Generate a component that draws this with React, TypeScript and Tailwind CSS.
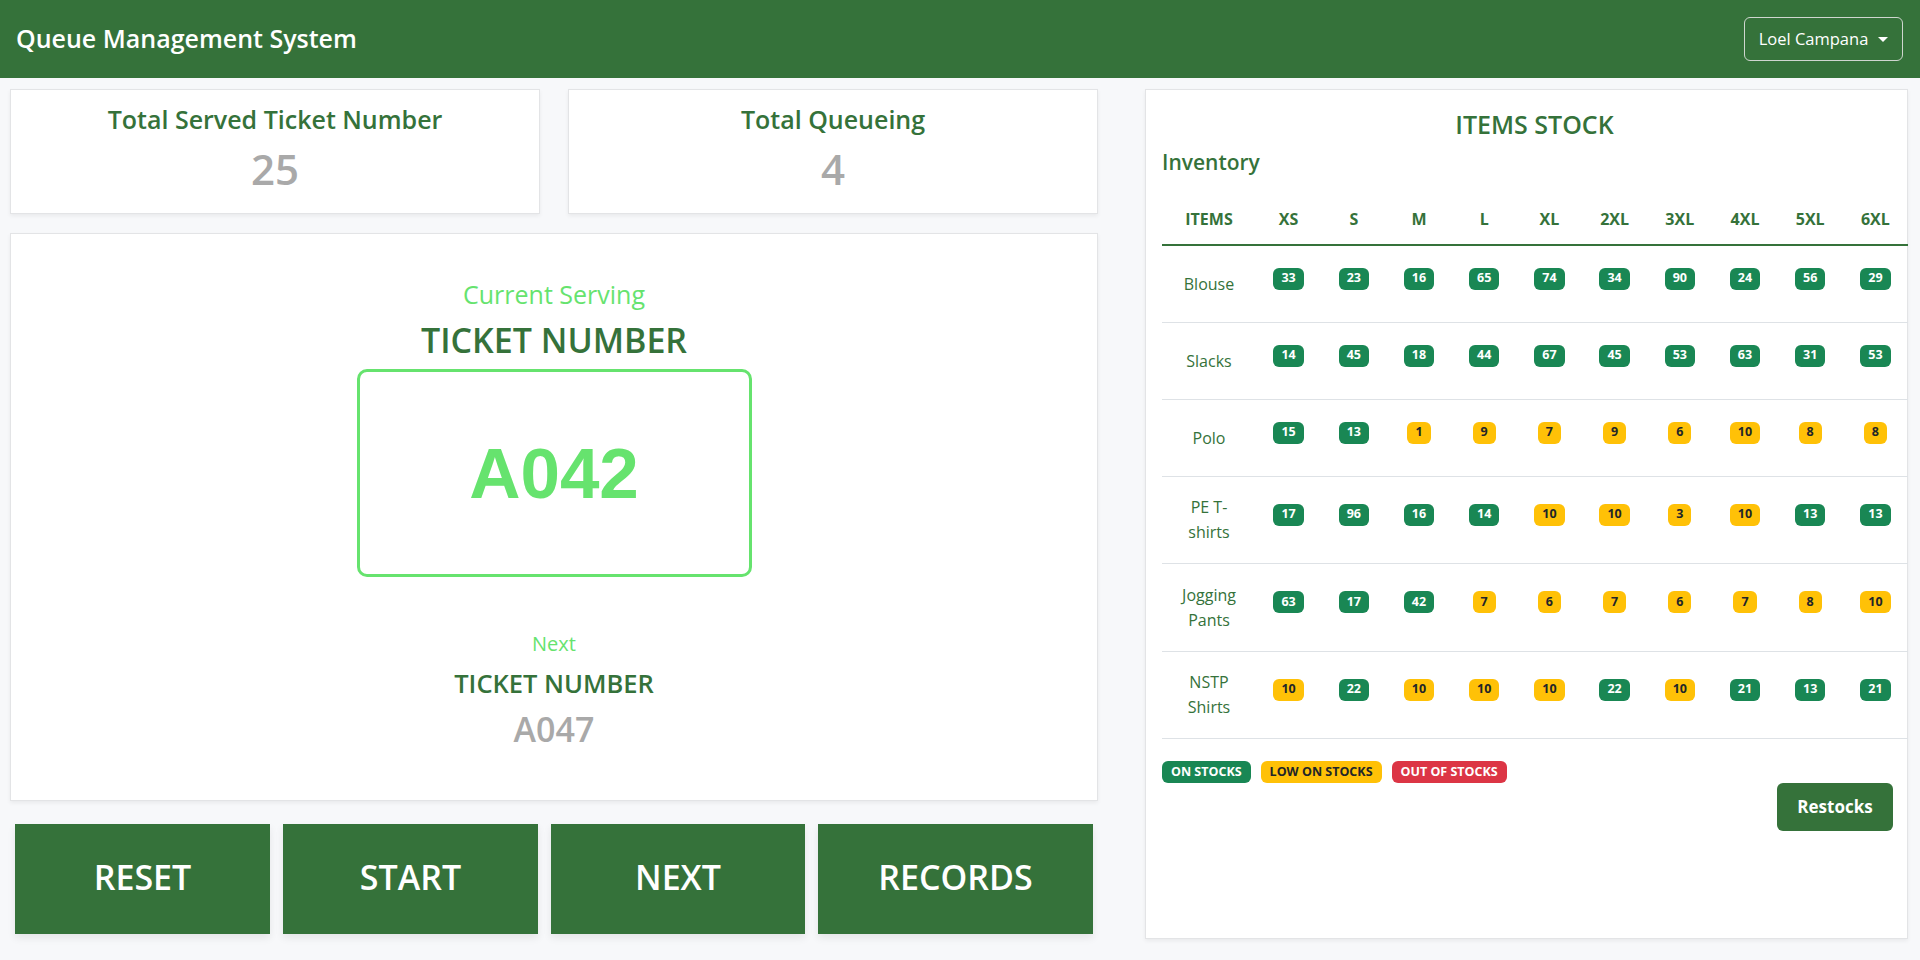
import React from "react";

const FONT = { fontFamily: '"Open Sans", "Noto Sans", sans-serif' };

type Lvl = "g" | "y" | "r";
const sizes = ["XS", "S", "M", "L", "XL", "2XL", "3XL", "4XL", "5XL", "6XL"];

const rows: { name: string; h: string; vals: number[] }[] = [
  { name: "Blouse", h: "h-[77px]", vals: [33, 23, 16, 65, 74, 34, 90, 24, 56, 29] },
  { name: "Slacks", h: "h-[77px]", vals: [14, 45, 18, 44, 67, 45, 53, 63, 31, 53] },
  { name: "Polo", h: "h-[77px]", vals: [15, 13, 1, 9, 7, 9, 6, 10, 8, 8] },
  { name: "PE T-shirts", h: "h-[87px]", vals: [17, 96, 16, 14, 10, 10, 3, 10, 13, 13] },
  { name: "Jogging Pants", h: "h-[88px]", vals: [63, 17, 42, 7, 6, 7, 6, 7, 8, 10] },
  { name: "NSTP Shirts", h: "h-[87px]", vals: [10, 22, 10, 10, 10, 22, 10, 21, 13, 21] },
];

function Badge({ v, lvl, wide }: { v: React.ReactNode; lvl: Lvl; wide?: boolean }) {
  const cls =
    lvl === "g"
      ? "bg-[#198754] text-white"
      : lvl === "y"
      ? "bg-[#ffc107] text-[#212529]"
      : "bg-[#dc3545] text-white";
  return (
    <span
      className={`inline-flex h-[22px] items-center justify-center rounded-[6px] ${
        wide ? "px-[9px]" : "px-[8px]"
      } text-[12.5px] font-bold leading-none ${cls}`}
    >
      {v}
    </span>
  );
}

function StatCard({ title, value }: { title: string; value: string }) {
  return (
    <div className="flex h-[125px] flex-1 flex-col items-center border border-[#e3e4e6] bg-white pt-[13px] shadow-[0_2px_4px_rgba(0,0,0,0.06)]">
      <div className="text-[25px] font-semibold leading-[32px] text-[#35723a]">{title}</div>
      <div className="mt-[6px] text-[42px] font-semibold leading-[56px] text-[#a9a9a9]">{value}</div>
    </div>
  );
}

function BigButton({ label, w }: { label: string; w: string }) {
  return (
    <button
      className={`flex h-[110px] ${w} items-center justify-center bg-[#35723a] pb-[4px] text-[34px] font-semibold text-white shadow-[0_4px_8px_rgba(0,0,0,0.08)]`}
    >
      {label}
    </button>
  );
}

export default function App() {
  return (
    <div className="h-[960px] w-full overflow-hidden bg-[#f7f8fa]" style={FONT}>
      {/* Navbar */}
      <div className="flex h-[78px] items-center justify-between bg-[#35723a] pl-[16px] pr-[17px]">
        <div className="text-[25px] font-semibold text-white">Queue Management System</div>
        <button className="flex h-[44px] w-[159px] items-center justify-center gap-[10px] rounded-[6px] border border-[#cfd6cf] text-[16.5px] text-white">
          <span>Loel Campana</span>
          <span className="mt-[1px] h-0 w-0 border-x-[5px] border-t-[5px] border-x-transparent border-t-white" />
        </button>
      </div>

      <div className="flex pt-[11px] pl-[10px]">
        {/* Left column */}
        <div className="flex w-[1088px] flex-col">
          <div className="flex gap-[28px]">
            <StatCard title="Total Served Ticket Number" value="25" />
            <StatCard title="Total Queueing" value="4" />
          </div>

          <div className="mt-[19px] flex h-[568px] flex-col items-center border border-[#e3e4e6] bg-white pt-[45px] shadow-[0_2px_4px_rgba(0,0,0,0.06)]">
            <div className="text-[25px] leading-[30px] text-[#66e36e]">Current Serving</div>
            <div className="mt-[9px] text-[34px] font-semibold leading-[44px] text-[#35723a]">TICKET NUMBER</div>
            <div className="mt-[7px] flex h-[208px] w-[395px] items-center justify-center rounded-[10px] border-[3px] border-[#66e36e]">
              <span
                className="text-[71px] font-bold leading-none text-[#66e36e]"
                style={{ fontFamily: '"Liberation Sans", Arial, sans-serif' }}
              >
                A042
              </span>
            </div>
            <div className="mt-[54px] text-[20px] font-medium leading-[26px] text-[#66e36e]">Next</div>
            <div className="mt-[10px] text-[25.5px] font-semibold leading-[32px] text-[#35723a]">TICKET NUMBER</div>
            <div className="mt-[8px] text-[34px] font-semibold leading-[44px] text-[#a9a9a9]">A047</div>
          </div>

          <div className="mt-[23px] flex gap-[13px] pl-[5px]">
            <BigButton label="RESET" w="w-[255px]" />
            <BigButton label="START" w="w-[255px]" />
            <BigButton label="NEXT" w="w-[254px]" />
            <BigButton label="RECORDS" w="w-[275px]" />
          </div>
        </div>

        {/* Right panel */}
        <div className="ml-[47px] flex h-[850px] w-[763px] flex-col border border-[#e3e4e6] bg-white pl-[16px] pt-[18px] shadow-[0_2px_4px_rgba(0,0,0,0.06)]">
          <div className="text-center text-[25px] font-semibold leading-[32px] text-[#35723a]">ITEMS STOCK</div>
          <div className="mt-[8px] text-[21px] font-semibold leading-[28px] text-[#35723a]">Inventory</div>

          <div className="mt-[23px] w-[746px]">
            <div className="grid grid-cols-[94px_repeat(10,minmax(0,1fr))] border-b-2 border-[#35723a] pt-[8px] pb-[13px]">
              <div className="text-center text-[16px] font-bold leading-[24px] text-[#35723a]">ITEMS</div>
              {sizes.map((s) => (
                <div key={s} className="text-center text-[16px] font-bold leading-[24px] text-[#35723a]">
                  {s}
                </div>
              ))}
            </div>
            {rows.map((r) => (
              <div
                key={r.name}
                className={`grid grid-cols-[94px_repeat(10,minmax(0,1fr))] border-b border-[#dee2e6] ${r.h}`}
              >
                <div className="flex items-center justify-center">
                  <span className="w-[72px] text-center text-[16px] leading-[25px] text-[#35723a]">{r.name}</span>
                </div>
                {r.vals.map((v, i) => (
                  <div key={i} className="flex items-center justify-center pb-[11px]">
                    <Badge v={v} lvl={v >= 11 ? "g" : "y"} />
                  </div>
                ))}
              </div>
            ))}
          </div>

          <div className="mt-[22px] flex gap-[10px]">
            <Badge v="ON STOCKS" lvl="g" wide />
            <Badge v="LOW ON STOCKS" lvl="y" wide />
            <Badge v="OUT OF STOCKS" lvl="r" wide />
          </div>
          <div className="flex justify-end pr-[14px]">
            <button className="h-[48px] w-[116px] rounded-[6px] bg-[#35723a] text-[17px] font-bold text-white">
              Restocks
            </button>
          </div>
        </div>
      </div>
    </div>
  );
}
